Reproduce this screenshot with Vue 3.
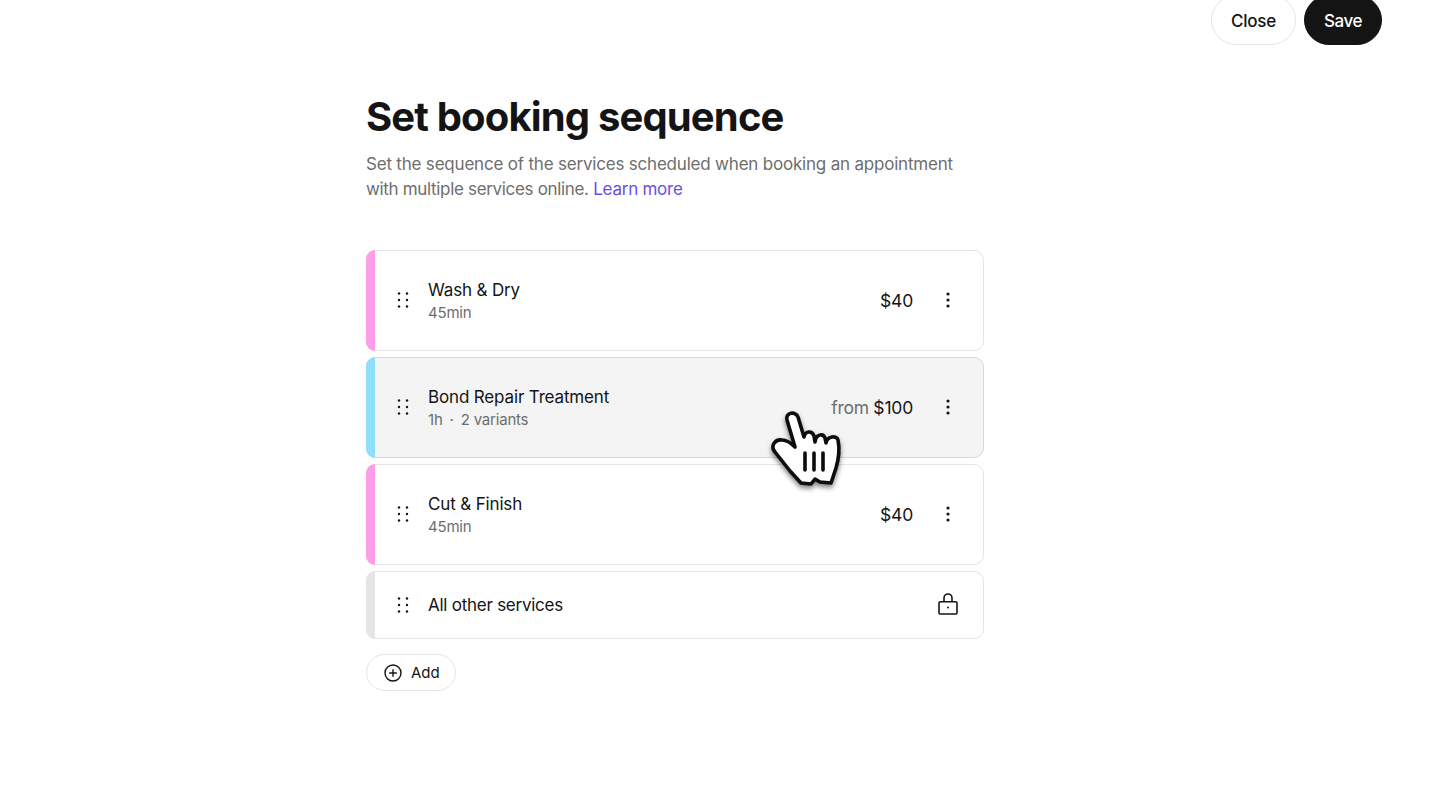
<script setup>
const services = [
  { id: 1, name: 'Wash & Dry', meta: ['45min'], from: false, price: '$40', color: '#ff9de6' },
  { id: 2, name: 'Bond Repair Treatment', meta: ['1h', '2 variants'], from: true, price: '$100', color: '#8fdffa', hover: true },
  { id: 3, name: 'Cut & Finish', meta: ['45min'], from: false, price: '$40', color: '#ff9de6' }
]
</script>

<template>
  <div class="page">
    <header class="top">
      <button class="btn ghost">Close</button>
      <button class="btn solid">Save</button>
    </header>
    <main class="content">
      <h1 class="title">Set booking sequence</h1>
      <p class="desc">Set the sequence of the services scheduled when booking an appointment <span class="tight">with multiple services online.</span> <a class="link">Learn more</a></p>
      <div class="list">
        <div v-for="s in services" :key="s.id" class="card" :class="{ hover: s.hover }">
          <span class="stripe" :style="{ background: s.color }"></span>
          <svg class="grip" width="12" height="18" viewBox="0 0 12 18" fill="#141414"><circle cx="2" cy="2.5" r="1.2"/><circle cx="10" cy="2.5" r="1.2"/><circle cx="2" cy="9" r="1.2"/><circle cx="10" cy="9" r="1.2"/><circle cx="2" cy="15.5" r="1.2"/><circle cx="10" cy="15.5" r="1.2"/></svg>
          <div class="info">
            <div class="name">{{ s.name }}</div>
            <div class="meta">
              <template v-for="(m, i) in s.meta" :key="m">
                <span v-if="i" class="dot">·</span>
                <span>{{ m }}</span>
              </template>
            </div>
          </div>
          <div class="price"><span v-if="s.from" class="from">from </span>{{ s.price }}</div>
          <svg class="more" width="4" height="16" viewBox="0 0 4 16" fill="#141414"><circle cx="2" cy="2" r="1.6"/><circle cx="2" cy="8" r="1.6"/><circle cx="2" cy="14" r="1.6"/></svg>
          <svg v-if="s.hover" class="cursor" width="100" height="120" viewBox="0 0 100 120">
            <defs><filter id="sh" x="-30%" y="-30%" width="160%" height="160%"><feDropShadow dx="0" dy="3" stdDeviation="2.5" flood-color="#000" flood-opacity=".5"/></filter></defs>
            <path filter="url(#sh)" d="M27 40C25 32 36 31 38 37L44 57C45 51 52 50 54 56L55 62C56 54 63 53 65 58L66 63C67 56 77 55 78 60C80 70 79 78 76 88L71 103L60 102L55 99L51 104L41 103L30 91L15 72C10 66 15 59 22 60C27 60 31 63 35 67Z" fill="#fff" stroke="#0c0c0c" stroke-width="3.6" stroke-linejoin="round"/>
            <path d="M45 73v17M54 73v17M63 73v17" stroke="#0c0c0c" stroke-width="3.6" stroke-linecap="round" fill="none"/>
          </svg>
        </div>
        <div class="card short">
          <span class="stripe grey"></span>
          <svg class="grip" width="12" height="18" viewBox="0 0 12 18" fill="#141414"><circle cx="2" cy="2.5" r="1.2"/><circle cx="10" cy="2.5" r="1.2"/><circle cx="2" cy="9" r="1.2"/><circle cx="10" cy="9" r="1.2"/><circle cx="2" cy="15.5" r="1.2"/><circle cx="10" cy="15.5" r="1.2"/></svg>
          <div class="info"><div class="name">All other services</div></div>
          <svg class="lock" width="20" height="22" viewBox="0 0 20 22" fill="none" stroke="#141414" stroke-width="1.6"><rect x="1" y="8.8" width="18" height="12.2" rx="1.2"/><path d="M6 8.8V5a4 4 0 0 1 8 0v3.8"/><circle cx="10" cy="14.5" r="1" fill="#141414" stroke="none"/></svg>
        </div>
      </div>
      <button class="add">
        <svg width="18" height="18" viewBox="0 0 18 18" fill="none" stroke="#141414" stroke-width="1.4"><circle cx="9" cy="9" r="8"/><path d="M9 5.2v7.6M5.2 9h7.6"/></svg>
        <span>Add</span>
      </button>
    </main>
  </div>
</template>

<style>
html, body { margin: 0; background: #fff; }
</style>

<style scoped>
.page { height: 800px; overflow: hidden; font-family: Inter, "Liberation Sans", sans-serif; color: #141414; }
.top { display: flex; justify-content: flex-end; gap: 8px; padding-right: 58px; margin-top: -5px; }
.btn { height: 50px; border-radius: 25px; font: 500 17px Inter, sans-serif; padding: 1px 0 0; letter-spacing: -0.2px; }
.ghost { width: 85px; background: #fff; border: 1px solid #e5e5e5; color: #141414; }
.solid { width: 78px; background: #141414; border: 1px solid #141414; color: #fff; letter-spacing: -0.5px; }
.content { width: 618px; margin: 50px 0 0 366px; }
.title { margin: 0; font-size: 40px; line-height: 44px; font-weight: 700; letter-spacing: -0.85px; }
.desc { margin: 13px 0 0; font-size: 17px; line-height: 25px; color: #6e6e6e; width: 600px; letter-spacing: -0.2px; }
.tight { letter-spacing: -0.33px; }
.link { color: #6950e0; letter-spacing: -0.25px; }
.list { display: flex; flex-direction: column; gap: 6px; margin-top: 48px; }
.card { position: relative; box-sizing: border-box; height: 101px; display: flex; align-items: center; border: 1px solid #e5e5e5; border-radius: 10px; padding-left: 8px; background: #fff; }
.card.short { height: 68px; }
.card.hover { background: #f4f4f4; border-color: #d8d8d8; }
.stripe { position: absolute; left: -1px; top: -1px; bottom: -1px; width: 9px; border-radius: 10px 0 0 10px; }
.stripe.grey { background: #e5e5e5; }
.grip { margin: 0 0 1px 22px; flex: none; }
.info { margin-left: 19px; flex: 1; }
.short .info { margin-bottom: 1px; }
.name { font-size: 17px; line-height: 24px; font-weight: 400; letter-spacing: -0.15px; }
.short .name { letter-spacing: -0.25px; }
.meta { font-size: 15px; line-height: 20px; margin-top: 1px; color: #6e6e6e; display: flex; gap: 7px; letter-spacing: -0.2px; }
.price { font-size: 17.5px; font-weight: 400; margin: 0 33px 1px 0; letter-spacing: -0.2px; }
.from { color: #6e6e6e; letter-spacing: -0.3px; }
.more { margin: 0 33px 1px 0; flex: none; }
.lock { margin: 0 25px 2px 0; flex: none; }
.cursor { position: absolute; left: 393px; top: 22px; z-index: 2; }
.add { display: flex; align-items: center; gap: 9px; box-sizing: border-box; height: 37px; width: 90px; margin-top: 15px; padding: 0 0 0 17px; background: #fff; border: 1px solid #e5e5e5; border-radius: 19px; font: 400 15px Inter, sans-serif; color: #141414; }
</style>
